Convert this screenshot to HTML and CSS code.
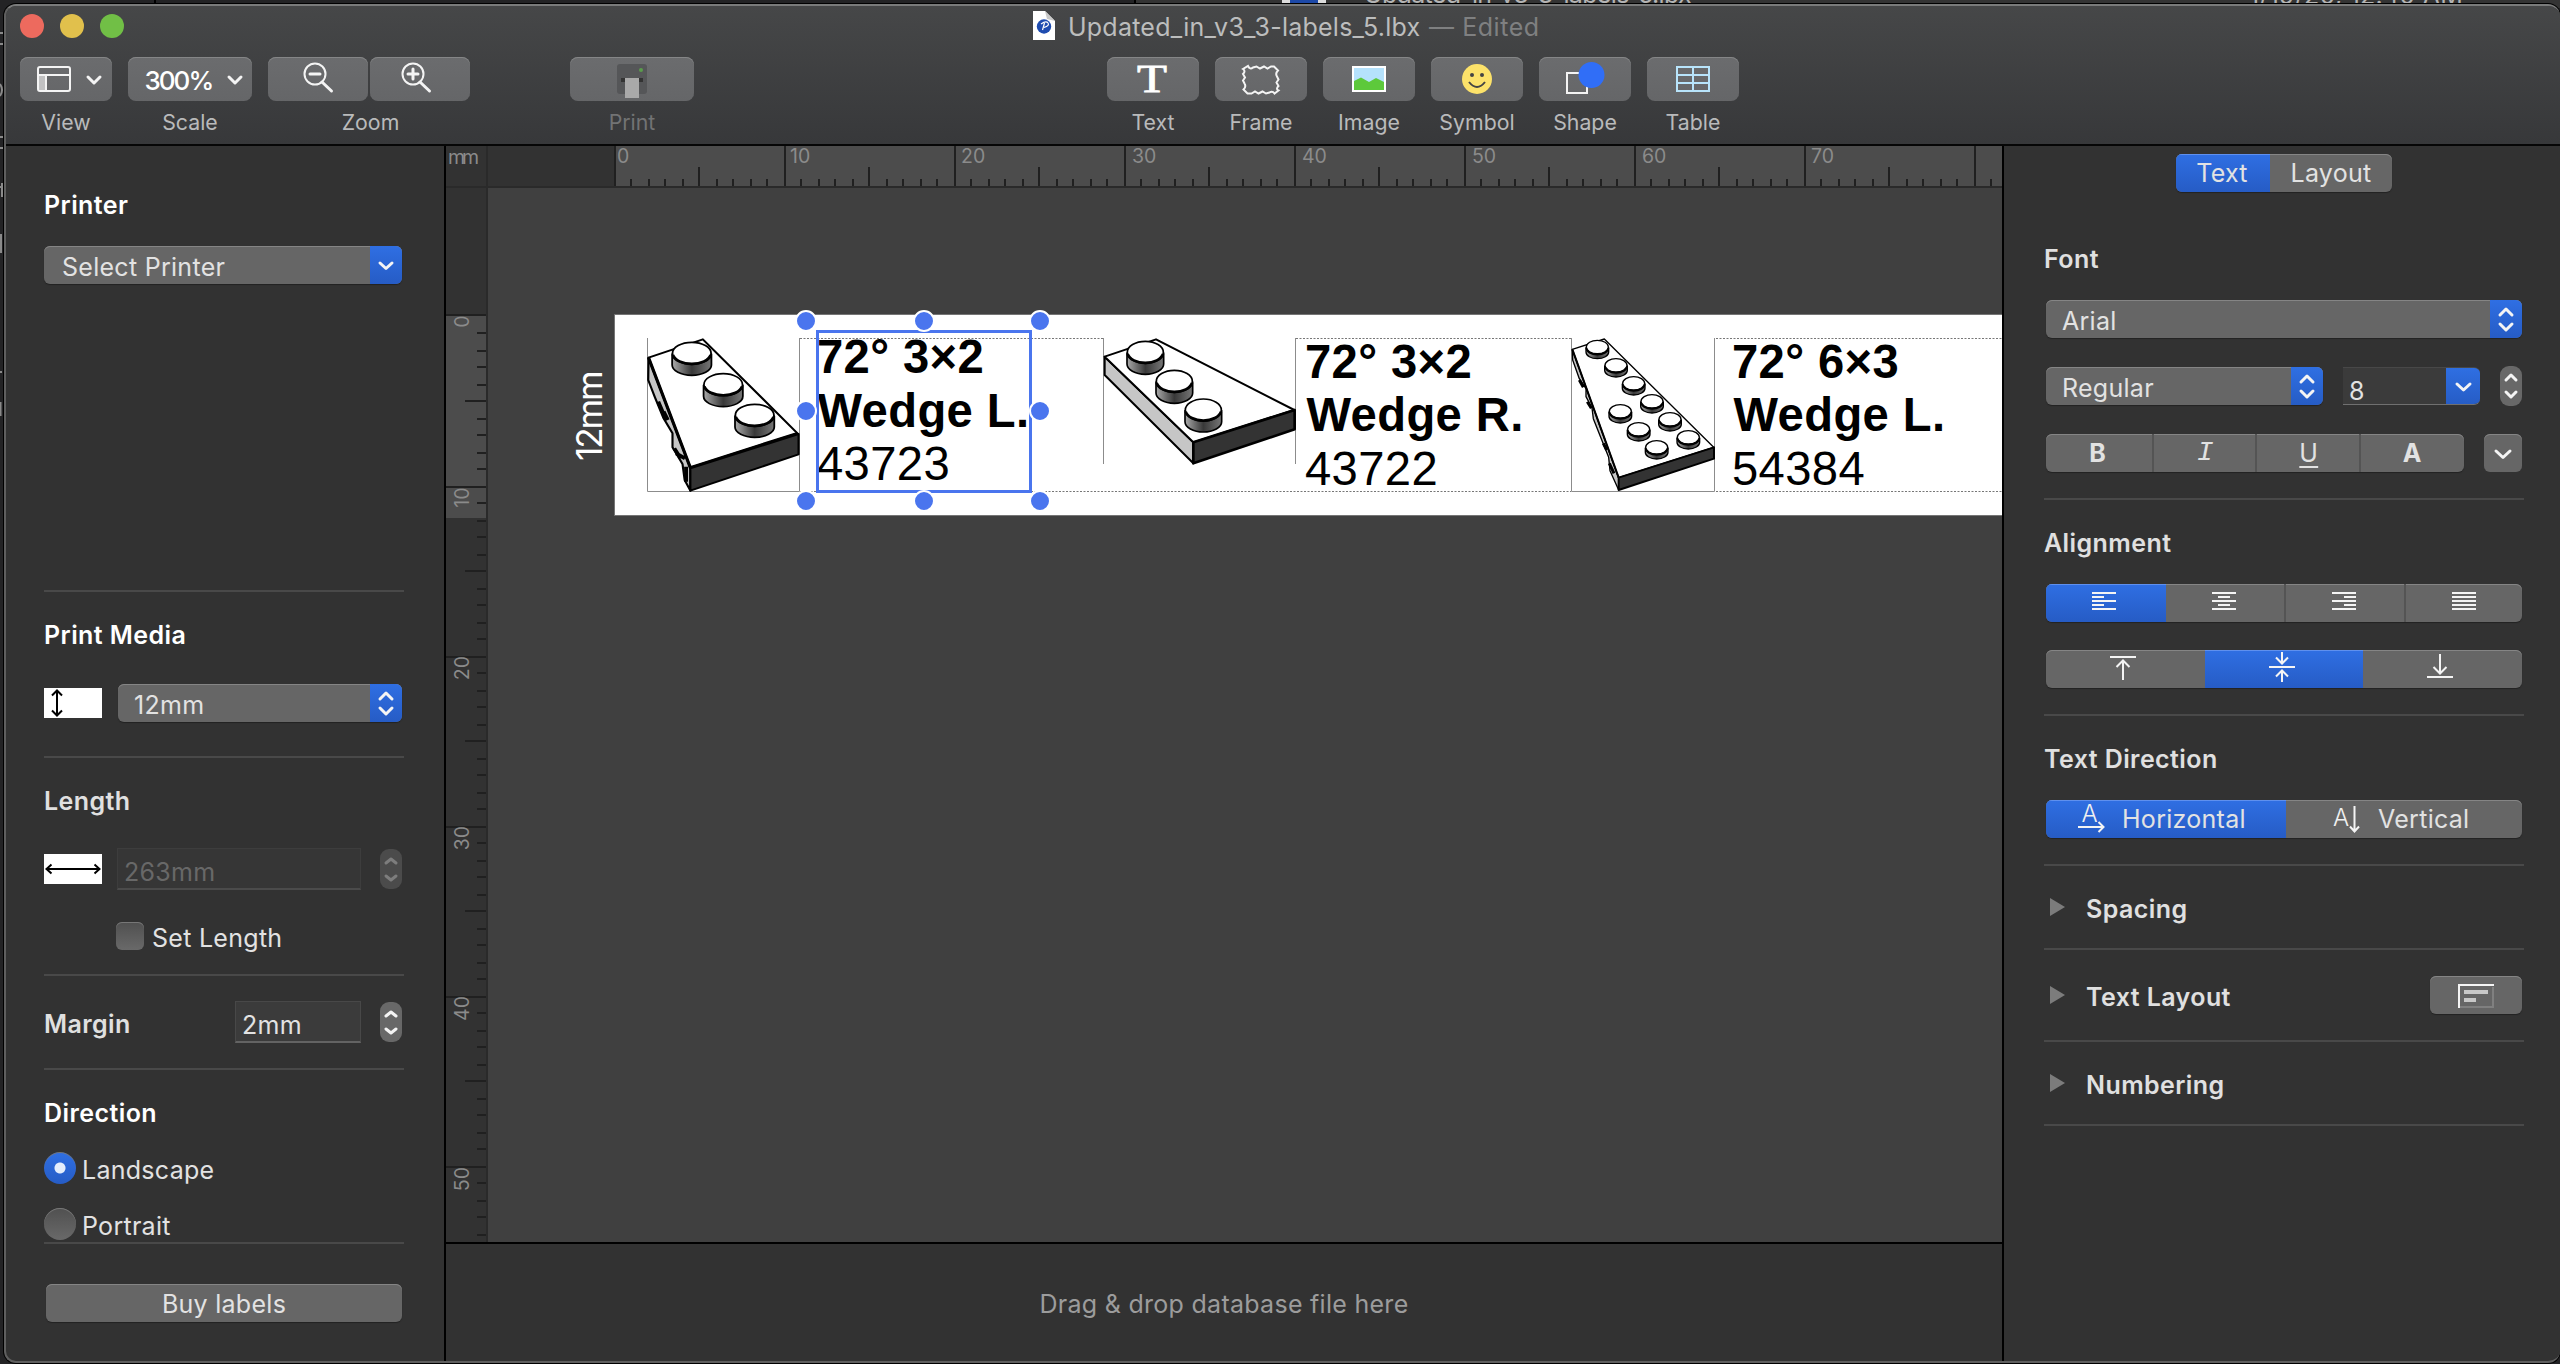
FILE: index.html
```html
<!DOCTYPE html>
<html lang="en">
<head>
<meta charset="utf-8">
<title>Updated_in_v3_3-labels_5.lbx</title>
<link rel="stylesheet" href="styles.css">
</head>
<body>
<div class="backdrop">
  <svg width="2560" height="1364" viewBox="0 0 2560 1364">
    <rect width="2560" height="1364" fill="#232325"/>
    <rect x="1135" width="1425" height="8" fill="#343434"/>
    <rect x="154" width="2" height="5" fill="#000"/><rect x="1134" width="2" height="5" fill="#000"/>
    <rect x="1282" width="44" height="4" fill="#dcdcdc"/><rect x="1290" width="28" height="4" fill="#1d49a8"/>
    <text x="1364" y="3" class="back-text" textLength="328">Updated_in_v3_3-labels_5.lbx</text>
    <text x="2249" y="4" class="back-text" textLength="214">1/19/20, 12:40 AM</text>
    <path d="M0 33h3M0 44h3M0 84q4 6 0 12M0 137h3M0 148h3M0 187h3M2 183v14M0 372h2" fill="none" stroke="#8a8a8a" stroke-width="2"/>
    <path d="M0 234h2v19H0zM0 402h1.5v14H0z" fill="#8a8a8a"/>
  </svg>
</div>
<div class="window">
  <header class="titlebar">
    <div class="title-row">
      <div class="lights"><i class="red"></i><i class="yellow"></i><i class="green"></i></div>
      <div class="doc-title">
        <svg width="22" height="30" viewBox="0 0 22 30"><path d="M0 0h12l10 10v19H0z" fill="#fff"/><path d="M12 0l2 8 8 2z" fill="#c9c9c9"/><circle cx="11" cy="15.500" r="7.200" fill="#1e4cb0"/><path d="M8 13q5-3.500 7-1t-4 4.500M11.500 12l-2 7" stroke="#fff" stroke-width="1.200" fill="none"/></svg>
        <span class="name">Updated_in_v3_3-labels_5.lbx</span><span class="edited">— Edited</span>
      </div>
    </div>
    <div class="tools">
      <div class="tool"><button class="tb w92"><svg viewBox="20 57 92 44"><rect x="38" y="67" width="32" height="24" rx="2" class="ln"/><path d="M38 75h32M46 75v16" class="ln"/><rect x="39" y="76" width="6" height="14" fill="#c2c2c3"/><path d="M88 77l6 6 6-6" class="ln r3"/></svg></button><span>View</span></div>
      <div class="tool"><button class="tb w124"><svg viewBox="128 57 124 44"><text x="144.500" y="90" class="scale-t" textLength="70">300%</text><path d="M229 77l6 6 6-6" class="ln r3"/></svg></button><span>Scale</span></div>
      <div class="tool zoom"><div class="pair"><button class="tb w100"><svg viewBox="268 57 100 44"><circle cx="315" cy="74" r="10.500" class="ln"/><path d="M310 74h10M322 82l9.500 9" class="ln r3"/></svg></button><button class="tb w100"><svg viewBox="370 57 100 44"><circle cx="413" cy="74" r="10.500" class="ln"/><path d="M408 74h10M413 69v10M420 82l9.500 9" class="ln r3"/></svg></button></div><span>Zoom</span></div>
      <div class="tool print"><button class="tb w124"><svg viewBox="570 57 124 44"><rect x="617" y="64" width="30" height="30" rx="3" fill="#555658"/><rect x="621" y="78" width="22" height="4" fill="#333"/><rect x="625" y="78" width="14" height="20" fill="#a9a9a9"/><circle cx="641" cy="70" r="2" fill="#5a9c4c"/></svg></button><span>Print</span></div>
      <div class="tool insert-first"><button class="tb w92"><svg viewBox="1107 57 92 44"><text x="1137" y="92" class="tee" textLength="30" lengthAdjust="spacingAndGlyphs">T</text></svg></button><span>Text</span></div>
      <div class="tool"><button class="tb w92"><svg viewBox="1215 57 92 44"><path d="M1248 66q2 4 5 1.500l3.500-1 3.500 2 4-2 3.500 2 3.500-2 3 0 4 4q-3 3-1 6l1.500 3-2 3 2 3.500q-3 3 0 4.500l-4 3q-2-3-5-1l-3.500 1-3.500-2-4 2-3.500-2-3.500 2-4 0-4-4q3-3 1-6l-1.500-3 2-3-2-3.500q3-3 0-5z" class="ln"/></svg></button><span>Frame</span></div>
      <div class="tool"><button class="tb w92"><svg viewBox="1323 57 92 44"><path d="M1352 66h34v26h-34z" fill="#fff"/><path d="M1354 68h30v22h-30z" fill="#b5e2fc"/><path d="M1354 81l7-3.500 8 4.500 7-4 8 4v8h-30z" fill="#5dc93b"/></svg></button><span>Image</span></div>
      <div class="tool"><button class="tb w92"><svg viewBox="1431 57 92 44"><circle cx="1477" cy="79" r="15" fill="#fce26a"/><circle cx="1472" cy="75" r="2" fill="#444"/><circle cx="1482" cy="75" r="2" fill="#444"/><path d="M1469 82q8 10 16 0" fill="none" stroke="#444" stroke-width="2"/></svg></button><span>Symbol</span></div>
      <div class="tool"><button class="tb w92"><svg viewBox="1539 57 92 44"><rect x="1567" y="73" width="20" height="20" class="ln"/><circle cx="1591.500" cy="75" r="13" fill="#306ef7"/></svg></button><span>Shape</span></div>
      <div class="tool"><button class="tb w92"><svg viewBox="1647 57 92 44"><path d="M1677 67h32v24h-32zM1677 75h32M1677 83h32M1693 67v24" fill="none" stroke="#b8e4fb" stroke-width="2"/></svg></button><span>Table</span></div>
    </div>
  </header>
  <main>
    <aside class="left">
      <h2 class="first white">Printer</h2>
      <div class="select s-printer"><span>Select Printer</span><b><svg viewBox="0 0 32 38"><path d="M10 17l6 5.500 6-5.500" class="ln r3"/></svg></b></div>
      <hr class="hr-printer">
      <h2 class="white">Print Media</h2>
      <div class="row media"><svg class="ico" width="58" height="30" viewBox="0 0 58 30"><path d="M13 3v24M8 7.500l5-5 5 5M8 22.500l5 5 5-5" fill="none" stroke="#000" stroke-width="2"/></svg>
        <div class="select grow"><span>12mm</span><b><svg viewBox="0 0 32 38"><path d="M10 15l6-6 6 6M10 24l6 6 6-6" class="ln r3"/></svg></b></div></div>
      <hr class="hr-media">
      <h2>Length</h2>
      <div class="row length"><svg class="ico" width="58" height="30" viewBox="0 0 58 30"><path d="M3 15h52M7.500 10.500l-5 4.500 5 4.500M50.500 10.500l5 4.500-5 4.500" fill="none" stroke="#000" stroke-width="2"/></svg>
        <div class="field off wide">263mm</div><div class="step off"><svg viewBox="0 0 22 40"><path d="M6 14l5-4 5 4M6 27l5 4 5-4" class="ln r3"/></svg></div></div>
      <div class="row check"><i class="box"></i><label>Set Length</label></div>
      <hr class="hr-check">
      <div class="row margin"><h2>Margin</h2><div class="field">2mm</div><div class="step"><svg viewBox="0 0 22 40"><path d="M6 14l5-4 5 4M6 27l5 4 5-4" class="ln r3"/></svg></div></div>
      <hr class="hr-margin">
      <h2 class="white">Direction</h2>
      <div class="row radio"><i class="dot on"></i><label>Landscape</label></div>
      <div class="row radio"><i class="dot"></i><label>Portrait</label></div>
      <hr class="hr-dir">
      <button class="buy">Buy labels</button>
    </aside>
    <section class="center">
      <div class="stage">
        <svg class="rule" width="42" height="42" viewBox="446 146 42 42"><rect x="446" y="146" width="42" height="42" fill="#323232"/><path d="M446 187h42M487 146v42" class="edge"/><text x="448" y="164" class="num" textLength="31">mm</text></svg>
        <svg class="rule" width="1514" height="42" viewBox="488 146 1514 42">
          <defs><pattern id="h" x="614" y="146" width="170" height="40" patternUnits="userSpaceOnUse"><path d="M0 0h2v40h-2zM84 21h2v19h-2zM16 33h2v7h-2zM34 33h2v7h-2zM50 33h2v7h-2zM68 33h2v7h-2zM102 33h2v7h-2zM118 33h2v7h-2zM136 33h2v7h-2zM152 33h2v7h-2z" fill="#202020"/></pattern></defs>
          <rect x="488" y="146" width="126" height="40" fill="#323232"/><rect x="614" y="146" width="1388" height="40" fill="#4c4c4c"/><rect x="614" y="146" width="1388" height="40" fill="url(#h)"/><path d="M488 187h1514" class="edge"/>
          <g class="num"><text x="617" y="163">0</text><text x="790" y="163">10</text><text x="961" y="163">20</text><text x="1132" y="163">30</text><text x="1302" y="163">40</text><text x="1472" y="163">50</text><text x="1642" y="163">60</text><text x="1811" y="163">70</text></g>
        </svg>
        <svg class="rule" width="42" height="1054" viewBox="446 188 42 1054">
          <defs><pattern id="v" x="446" y="316" width="40" height="170" patternUnits="userSpaceOnUse"><path d="M0 0h40v2h-40zM19 84h21v2h-21zM31 16h9v2h-9zM31 34h9v2h-9zM31 50h9v2h-9zM31 68h9v2h-9zM31 102h9v2h-9zM31 118h9v2h-9zM31 136h9v2h-9zM31 152h9v2h-9z" fill="#202020"/></pattern></defs>
          <rect x="446" y="188" width="40" height="1054" fill="#323232"/><rect x="446" y="314" width="40" height="204" fill="#4c4c4c"/><rect x="446" y="314" width="40" height="2" fill="#202020"/><rect x="446" y="318" width="40" height="924" fill="url(#v)"/><path d="M487 188v1054" class="edge"/>
          <g class="num" text-anchor="end"><text transform="translate(469 315.500) rotate(-90)">0</text><text transform="translate(469 487.500) rotate(-90)">10</text><text transform="translate(469 656) rotate(-90)">20</text><text transform="translate(469 826) rotate(-90)">30</text><text transform="translate(469 996) rotate(-90)">40</text><text transform="translate(469 1167) rotate(-90)">50</text></g>
        </svg>
        <svg width="1514" height="1054" viewBox="488 188 1514 1054">
          <defs>
            <linearGradient id="s"><stop offset="0" stop-color="#aaa"/><stop offset=".5" stop-color="#383838"/><stop offset="1" stop-color="#777"/></linearGradient>
            <g id="stud" stroke="#000" stroke-width="5"><path d="M-55 2v33a55 31 0 0 0 110 0v-33z" fill="url(#s)"/><ellipse rx="54" ry="33" fill="#fff"/><path d="M-53 5a54 33 0 0 0 106 0" fill="none" stroke-width="8"/></g>
            <g id="stud6" stroke="#000" stroke-width="4"><path d="M-34 2v13a34 20 0 0 0 68 0v-13z" fill="url(#s)"/><ellipse rx="33" ry="20" fill="#fff"/><path d="M-33 3a33 20 0 0 0 66 0" fill="none" stroke-width="5"/></g>
          </defs>
          <rect x="488" y="188" width="1514" height="1054" fill="#404040"/>
          <path d="M2003 314.500H614.500v201H2003" fill="#fff" stroke="#757575"/>
          <text class="tape" transform="translate(601.500 461) rotate(-90)" textLength="91">12mm</text>
          <path d="M647.500 338v153.500h152V338M1103.500 338v126M1295.500 338v126M1571.500 338v153.500h143V338" fill="none" stroke="#8c8c8c"/>
          <path d="M800 338.500h304M800 491.500h771M1296 338.500h275M1716 338.500h286M1716 491.500h286" fill="none" stroke="#777" stroke-dasharray="2 1.500"/>
          <g transform="translate(560 290) scale(.35714 .33333)" stroke="#000" stroke-width="6" stroke-linejoin="round">
            <path d="M248 203l117 330v69l-16-32-6-48-28-50v-42l-25-45-25-65-18-50z" fill="#c6c6c6"/>
            <path d="M275 335l22 55M290 365l12 25M320 475l18 30M325 490l25 15M353 530v45" stroke-width="11"/>
            <path d="M248 203l152-55 265 282-300 103z" fill="#fff"/><path d="M248 203l117 330 300-103" fill="none" stroke-width="9"/>
            <path d="M365 535l303-103v61l-303 109z" fill="#333"/>
            <use href="#stud" x="369" y="190"/><use href="#stud" x="457" y="284"/><use href="#stud" x="545" y="376"/>
          </g>
          <g transform="translate(1080 290) scale(.33333)" stroke="#000" stroke-width="6" stroke-linejoin="round">
            <path d="M74 200l266 257v63l-266-265z" fill="#c6c6c6"/>
            <path d="M74 200l154-52 415 212-303 97z" fill="#fff"/>
            <path d="M340 457l304-97v58l-304 102z" fill="#333" stroke-width="8"/>
            <g><use href="#stud" x="196" y="187"/><use href="#stud" x="283" y="274"/><use href="#stud" x="370" y="360"/></g>
          </g>
          <g transform="translate(1540 290) scale(.33333)" stroke="#000" stroke-width="4" stroke-linejoin="round">
            <path d="M97 178l139 385v37l-26-58-4-40-24-60-22-56-4-32-18-34v-24l-20-30-20-56z" fill="#c6c6c6"/>
            <path d="M118 270l12 22M142 335l12 20M190 460l10 20M208 520l14 30" stroke-width="9"/>
            <path d="M97 178l96-31 328 325-285 91z" fill="#fff"/><path d="M97 178l139 385" stroke-width="6"/>
            <path d="M236 563l286-91v34l-286 94z" fill="#333" stroke-width="6"/>
            <use href="#stud6" x="172" y="171"/><use href="#stud6" x="228" y="226"/><use href="#stud6" x="281" y="280"/><use href="#stud6" x="336" y="334"/><use href="#stud6" x="390" y="388"/><use href="#stud6" x="445" y="442"/><use href="#stud6" x="241" y="364"/><use href="#stud6" x="296" y="418"/><use href="#stud6" x="350" y="472"/>
          </g>
          <g class="lab"><text x="817" y="373">72° 3×2</text><text x="817.500" y="426.500">Wedge L.</text><text x="817" y="480" class="thin">43723</text>
          <text x="1305" y="378">72° 3×2</text><text x="1306.500" y="431">Wedge R.</text><text x="1305" y="484.500" class="thin">43722</text>
          <text x="1732" y="378">72° 6×3</text><text x="1733.500" y="431">Wedge L.</text><text x="1732" y="484.500" class="thin">54384</text></g>
          <rect x="817.500" y="331.500" width="213" height="160" fill="none" stroke="#4a75ee" stroke-width="3"/>
          <g fill="#4a75ee" stroke="#fff" stroke-width="2"><circle cx="806" cy="321" r="10"/><circle cx="924" cy="321" r="10"/><circle cx="1040" cy="321" r="10"/><circle cx="806" cy="411" r="10"/><circle cx="1040" cy="411" r="10"/><circle cx="806" cy="501" r="10"/><circle cx="924" cy="501" r="10"/><circle cx="1040" cy="501" r="10"/></g>
        </svg>
      </div>
      <div class="drop">Drag &amp; drop database file here</div>
    </section>
    <aside class="right">
      <div class="seg tabs"><span class="on w94">Text</span><span>Layout</span></div>
      <h2 class="h-font">Font</h2>
      <div class="select s-font"><span>Arial</span><b><svg viewBox="0 0 32 38"><path d="M10 15l6-6 6 6M10 24l6 6 6-6" class="ln r3"/></svg></b></div>
      <div class="row style"><div class="select s-style"><span>Regular</span><b><svg viewBox="0 0 32 38"><path d="M10 15l6-6 6 6M10 24l6 6 6-6" class="ln r3"/></svg></b></div>
        <div class="combo"><span>8</span><b><svg viewBox="0 0 34 38"><path d="M11 17l6.500 6 6.500-6" class="ln r3"/></svg></b></div>
        <div class="step"><svg viewBox="0 0 22 40"><path d="M6 14l5-5 5 5M6 26l5 5 5-5" class="ln r3"/></svg></div></div>
      <div class="row bius"><div class="seg lines"><span class="bold bee">B</span><span class="ital">I</span><span class="under">U</span><span class="bold">A</span></div>
        <button class="more"><svg viewBox="0 0 38 38"><path d="M12 17l7 6.500 7-6.500" class="ln r3"/></svg></button></div>
      <hr class="m26">
      <h2 class="mt28">Alignment</h2>
      <div class="seg lines al"><span class="on"><svg viewBox="2046 584 120 38"><path d="M2092 593h24M2092 597h12M2092 601h24M2092 605h12M2092 609h24" class="ln"/></svg></span><span><svg viewBox="2166 584 120 38"><path d="M2212 593h24M2218 597h12M2212 601h24M2218 605h12M2212 609h24" class="ln"/></svg></span><span><svg viewBox="2286 584 120 38"><path d="M2332 593h24M2344 597h12M2332 601h24M2344 605h12M2332 609h24" class="ln"/></svg></span><span><svg viewBox="2406 584 116 38"><path d="M2452 593h24M2452 597h24M2452 601h24M2452 605h24M2452 609h24" class="ln"/></svg></span></div>
      <div class="seg va"><span><svg viewBox="2046 650 160 38"><path d="M2110 657h26M2123 680v-19M2116.500 667l6.500-6.500 6.500 6.500" class="ln"/></svg></span><span class="on"><svg viewBox="2206 650 158 38"><path d="M2270 667h26M2283 652v11M2277 657.500l6 6 6-6M2283 682v-11M2277 676.500l6-6 6 6" class="ln"/></svg></span><span><svg viewBox="2364 650 158 38"><path d="M2428 677h26M2441 654v19M2434.500 667l6.500 6.500 6.500-6.500" class="ln"/></svg></span></div>
      <hr class="m26">
      <h2 class="mt28">Text Direction</h2>
      <div class="seg dir"><span class="on"><svg width="28" height="38" viewBox="2077 800 28 38"><text x="2081.500" y="822" class="ai">A</text><path d="M2078 827h25M2098.500 822l5 5-5 5" class="ln"/></svg><em>Horizontal</em></span><span><svg width="28" height="38" viewBox="2333 800 28 38"><text x="2333" y="826" class="ai">A</text><path d="M2354.500 806v25M2350 826.500l4.500 5 4.500-5" class="ln"/></svg><em>Vertical</em></span></div>
      <hr class="m26">
      <div class="fold f1"><i></i><h2>Spacing</h2></div>
      <hr>
      <div class="fold f2"><i></i><h2>Text Layout</h2><button class="lay"><svg viewBox="2430 976 92 38"><path d="M2459 1008v-23h35" class="ln"/><path d="M2493 987v20h-33" fill="none" stroke="#808080" stroke-width="2"/><path d="M2464 992h24M2464 1000h12" stroke="#c8c8c8" stroke-width="4"/></svg></button></div>
      <hr>
      <div class="fold f3"><i></i><h2>Numbering</h2></div>
      <hr>
    </aside>
  </main>
</div>
</body>
</html>
```
FILE: styles.css
```css
* { box-sizing: border-box; }
body { margin: 0; width: 2560px; height: 1364px; overflow: hidden; position: relative; background: #232325; font: 25px/30px Inter, "Liberation Sans", sans-serif; letter-spacing: .28px; color: #e2e2e2; padding: 4px 0 0 4px; }
.backdrop { position: absolute; left: 0; top: 0; }
.backdrop svg, svg { display: block; }
.back-text { font-size: 25px; fill: #b4b4b4; }
.window { position: relative; width: 2556px; height: 1359px; border: 2px solid #5f5f5f; border-top-color: #7a7b7b; border-right: 0; border-radius: 12px; box-shadow: 0 0 0 1px #000; overflow: hidden; background: #323232; display: flex; flex-direction: column; }
button { font: inherit; letter-spacing: inherit; color: inherit; border: 0; padding: 0; }
h2 { font-size: 25px; line-height: 30px; font-weight: 600; letter-spacing: .42px; margin: 0; color: #e0e0e0; white-space: nowrap; }
h2.white { color: #fff; }
.ln { fill: none; stroke: #f4f4f4; stroke-width: 2; }
.r3 { stroke-width: 3; stroke-linecap: round; stroke-linejoin: round; }

.titlebar { height: 140px; flex: none; background: linear-gradient(#464748, #37383a); border-bottom: 2px solid #060606; }
.title-row { height: 51px; display: flex; padding-left: 14px; }
.lights { display: flex; gap: 16px; padding-top: 8px; }
.lights i { width: 24px; height: 24px; border-radius: 50%; }
.red { background: #ed6a5e; } .yellow { background: #e1c04c; } .green { background: #71bf46; }
.doc-title { margin-left: 909px; display: flex; padding-top: 5px; color: #bcbdbd; }
.doc-title .name { margin-left: 13px; width: 361px; padding-top: 1px; letter-spacing: .23px; white-space: nowrap; }
.edited { padding-top: 1px; letter-spacing: .55px; color: #7f8081; white-space: nowrap; }
.tools { display: flex; gap: 16px; padding-left: 14px; }
.tool { display: flex; flex-direction: column; align-items: center; }
.tool > span { margin-top: 8px; font-size: 21.300px; line-height: 26px; letter-spacing: 0; color: #b9babb; }
.tool.zoom > span { padding-left: 3px; }
.tool.print { margin-left: 84px; }
.tool.print > span { color: #727374; }
.tool.insert-first { margin-left: 397px; }
.pair { display: flex; gap: 2px; }
.tb { height: 44px; border-radius: 8px; background: linear-gradient(#6b6c6e, #656668); box-shadow: inset 0 1px #858687; overflow: hidden; }
.w92 { width: 92px; } .w124 { width: 124px; } .w100 { width: 100px; }
.tb svg { width: 100%; height: 100%; }
.scale-t { font-size: 26px; font-weight: 500; fill: #fff; }
.tee { font: 400 39px "Liberation Serif", serif; letter-spacing: 0; fill: #fff; stroke: #fff; stroke-width: .8px; }

main { flex: 1; display: flex; min-height: 0; }
.left { width: 440px; flex: none; padding: 44px 40px 0 38px; border-right: 2px solid #000; display: flex; flex-direction: column; }
hr { border: 0; height: 2px; background: #494949; margin: 0; flex: none; }
.left hr + h2 { margin-top: 28px; }
.row { display: flex; flex: none; }
.select { position: relative; height: 38px; flex: none; display: flex; justify-content: space-between; border-radius: 6px; background: #666; box-shadow: inset 0 1px #858585, 0 1px 1px #222; overflow: hidden; }
.select span { padding: 6px 0 0 16px; white-space: nowrap; }
.select b, .combo b { width: 32px; background: linear-gradient(#2f6fe3, #265cc5); }
.select b svg, .combo b svg, .step svg { width: 100%; height: 100%; }
.s-printer { width: 358px; margin-top: 26px; }
.s-printer span { padding-left: 18px; }
.hr-printer { margin-top: 306px; }
.ico { background: #fff; margin-top: 4px; }
.media { margin-top: 34px; gap: 16px; }
.media .select { width: 284px; }
.hr-media { margin-top: 34px; }
.length { margin-top: 32px; }
.length .ico { margin-top: 6px; }
.field { width: 126px; height: 42px; padding: 8px 0 0 6px; background: #3b3b3b; border: 1px solid #484848; border-bottom: 2px solid #636363; line-height: 30px; }
.field.wide { width: 244px; margin-left: 15px; }
.field.off { color: #686868; background: #363636; border-color: #3d3d3d; border-bottom-color: #4b4b4b; }
.step { width: 22px; height: 40px; margin: 1px 0 0 19px; border-radius: 9px; background: #686868; }
.step.off { background: #4b4b4b; }
.step.off .ln { stroke: #7d7d7d; }
.check { height: 30px; margin: 32px 0 0 72px; gap: 8px; }
.box { width: 28px; height: 28px; border-radius: 6px; background: linear-gradient(#505050, #696969); box-shadow: inset 0 1px #777; }
.check label { padding-top: 1px; }
.hr-check { margin-top: 22px; }
.margin { margin-top: 25px; }
.margin h2 { width: 191px; padding-top: 8px; }
.hr-margin { margin-top: 25px; }
.radio { height: 32px; margin-top: 24px; gap: 6px; }
.radio label { padding-top: 3px; }
.dot { width: 32px; height: 32px; border-radius: 50%; background: linear-gradient(#505050, #696969); box-shadow: inset 0 1px #777; }
.dot.on { background: radial-gradient(circle, #e4edfc 5px, transparent 6px), linear-gradient(#2f6fe3, #265cc5); }
.hr-dir { margin-top: 2px; }
.buy { width: 356px; height: 38px; flex: none; margin: 40px 0 0 2px; border-radius: 6px; background: #666; box-shadow: inset 0 1px #858585, 0 1px 1px #222; padding-top: 2px; }

.center { width: 1556px; flex: none; display: flex; flex-direction: column; }
.stage { display: grid; grid-template-columns: 42px 1514px; grid-template-rows: 42px 1054px; flex: none; }
.rule { overflow: visible; }
.edge { stroke: #2a2a2a; stroke-width: 2; }
.num { font-size: 19.500px; letter-spacing: 0; fill: #8b8b8b; }
.tape { font-size: 35px; fill: #fff; }
.lab { font: 700 47.200px "Liberation Sans", Arial, sans-serif; letter-spacing: .38px; fill: #000; }
.thin { font-weight: 400; }
.drop { flex: 1; border-top: 2px solid #000; text-align: center; padding-top: 45px; color: #9c9c9c; }

.right { flex: 1; border-left: 2px solid #000; padding: 8px 36px 0 40px; display: flex; flex-direction: column; }
.seg { display: flex; flex: none; height: 38px; border-radius: 6px; background: #666; overflow: hidden; box-shadow: inset 0 1px #858585, 0 1px 1px #222; }
.seg span { flex: 1; min-width: 0; text-align: center; padding-top: 4px; }
.seg .on { background: linear-gradient(#2f6fe3, #265cc5); box-shadow: inset 0 1px #5f90ee; }
.seg svg { margin-top: -4px; }
.tabs { width: 216px; margin-left: 132px; }
.tabs .w94 { flex: 0 0 94px; padding-right: 2px; }
.h-font { margin-top: 52px; }
.s-font { width: 476px; margin: 26px 0 0 2px; }
.style { margin: 28px 0 0 2px; }
.s-style { width: 277px; margin-top: 1px; }
.style .step { margin: 0 0 0 20px; }
.combo { width: 137px; height: 38px; margin: 1px 0 0 20px; display: flex; justify-content: space-between; background: #3b3b3b; border-top: 1px solid #484848; border-bottom: 1px solid #707070; border-radius: 0 6px 6px 0; overflow: hidden; }
.combo span { padding: 8px 0 0 6px; }
.combo b { width: 34px; margin: -1px 0; }
.bius { margin: 28px 0 0 2px; gap: 20px; }
.bius .seg { width: 418px; }
.lines span:not(.on):not(:last-child) { background: linear-gradient(#545454, #545454) right / 2px 100% no-repeat; }
.bold { font-weight: 700; }
.seg .bee { padding-right: 4px; }
.ital { font-family: "Liberation Mono", monospace; font-style: italic; font-size: 28px; }
.under { text-decoration: underline; text-underline-offset: 4px; }
.more { width: 38px; height: 38px; border-radius: 6px; background: #666; box-shadow: inset 0 1px #858585; }
.m26 { margin-top: 26px; }
.mt28 { margin-top: 28px; }
.al { width: 476px; margin: 26px 0 0 2px; }
.al span { flex: 0 0 120px; }
.al span:last-child { flex: 0 0 116px; }
.va { width: 476px; margin: 28px 0 0 2px; }
.al svg, .va svg { height: 38px; }
.dir { width: 476px; margin: 26px 0 0 2px; }
.dir span { display: flex; flex: 0 0 240px; padding: 0 0 0 31px; }
.dir span + span { flex-basis: 236px; padding-left: 47px; }
.dir em { font-style: normal; margin-left: 17px; margin-top: 4px; line-height: 30px; }
.dir svg { margin-top: 0; }
.ai { font-size: 24px; font-weight: 300; fill: #f0f0f0; }
.fold { display: flex; flex: none; height: 82px; }
.fold i { width: 15px; height: 18px; background: #7c7c7c; clip-path: polygon(0 0, 100% 50%, 0 100%); margin: 32px 21px 0 6px; }
.fold h2 { padding-top: 28px; }
.f2 { height: 90px; }
.f2 i { margin-top: 36px; } .f2 h2 { padding-top: 32px; }
.lay { width: 92px; height: 38px; margin: 26px 2px 0 auto; border-radius: 6px; background: #666; box-shadow: inset 0 1px #858585, 0 1px 1px #222; }
```
